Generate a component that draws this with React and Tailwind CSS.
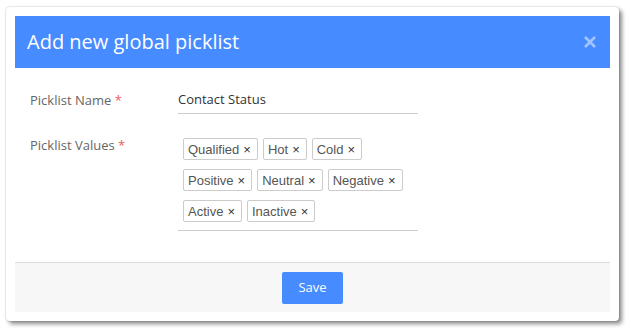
import React from 'react';

const tagRows = ['Qualified', 'Hot', 'Cold', 'Positive', 'Neutral', 'Negative', 'Active', 'Inactive'];

const Tag = ({ label }) => (
  <span className="flex h-[22px] items-center rounded-[2px] border border-[#cccccc] bg-white pl-[4px] pr-[6px] font-['Liberation_Sans',Arial,sans-serif] text-[13px] leading-none text-[#555555]">
    <span>{label}</span>
    <span className="ml-[4px] text-[13px] leading-none text-[#333]">×</span>
  </span>
);

const App = () => {
  return (
    <div className="min-h-screen bg-white pl-[6px] pt-[7px] font-['Open_Sans',sans-serif]">
      <div className="w-[613px] rounded-[4px] bg-white p-[9px] shadow-[0_0_2px_rgba(0,0,0,0.25),3px_3px_4px_rgba(0,0,0,0.45)]">
        {/* Header */}
        <div className="flex h-[52px] items-center justify-between bg-[#468bff] pl-[12px] pr-[13px]">
          <h1 className="text-[20px] font-normal leading-none text-white">Add new global picklist</h1>
          <svg width="14" height="14" viewBox="0 0 14 14">
            <path d="M2 2 L12 12 M12 2 L2 12" stroke="rgba(255,255,255,0.5)" strokeWidth="2.6" />
          </svg>
        </div>

        {/* Body */}
        <div className="px-[15px] pb-[31px] pt-[21px]">
          <div className="flex">
            <label className="w-[148px] pt-[1px] text-[13px] leading-[20px] text-[#666666]">
              Picklist Name <span className="text-[#f05a5a]">*</span>
            </label>
            <div className="w-[240px] border-b border-[#cccccc] pb-[4px] text-[13px] leading-[20px] text-[#333333]">
              Contact Status
            </div>
          </div>

          <div className="mt-[19px] flex">
            <label className="w-[148px] pt-[2px] text-[13px] leading-[20px] text-[#666666]">
              Picklist Values <span className="text-[#f05a5a]">*</span>
            </label>
            <div className="flex w-[240px] flex-wrap gap-x-[5px] gap-y-[9px] border-b border-[#cccccc] pb-[8px] pl-[5px] pr-[5px] pt-[5px]">
              {tagRows.map((t) => (
                <Tag key={t} label={t} />
              ))}
            </div>
          </div>
        </div>

        {/* Footer */}
        <div className="flex h-[50px] items-center justify-center border-t border-[#dddddd] bg-[#f7f7f7]">
          <button className="h-[32px] w-[61px] rounded-[2px] bg-[#468bff] text-[13px] text-white">Save</button>
        </div>
      </div>
    </div>
  );
};

export default App;
